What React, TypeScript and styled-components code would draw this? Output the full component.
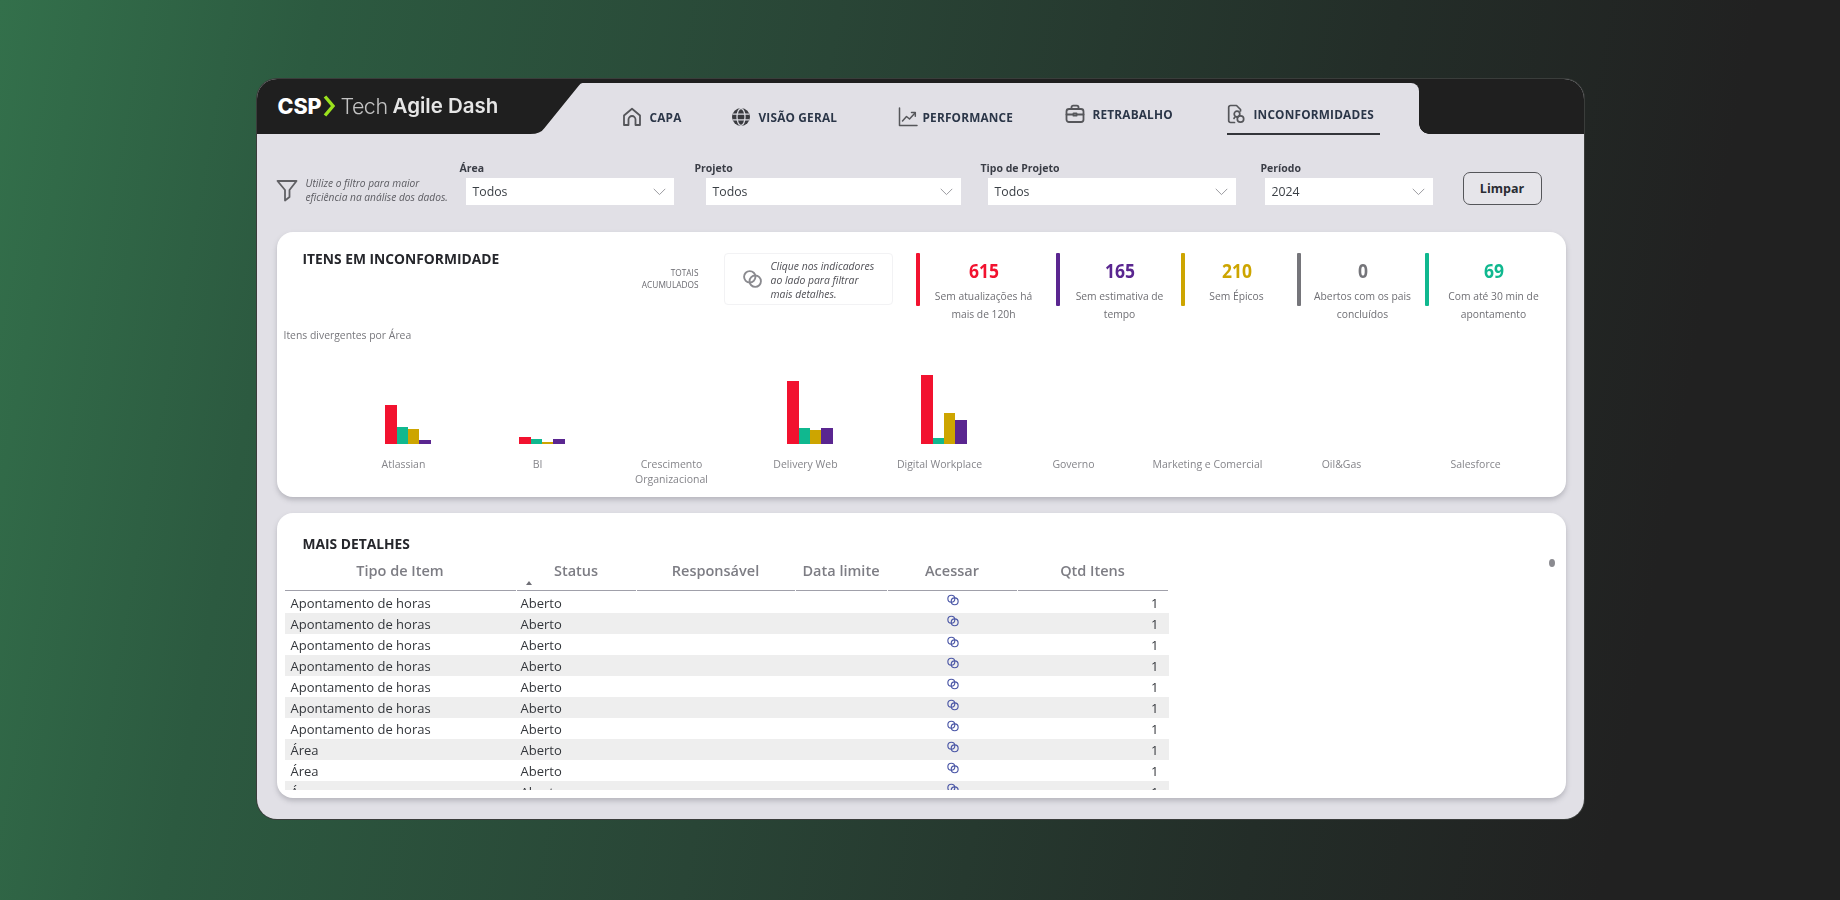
import React from "react";
import styled, { createGlobalStyle } from "styled-components";

const Global = createGlobalStyle`
  html, body { margin: 0; padding: 0; width: 1840px; height: 900px; overflow: hidden; background: #212121; }
  * { box-sizing: border-box; }
`;

const Page = styled.div`
  width: 1840px;
  height: 900px;
  padding-top: 79px;
  display: flex;
  justify-content: center;
  align-items: flex-start;
  background: linear-gradient(100deg, #33704b 0%, #2c5a40 16%, #294536 42%, #232d28 70%, #212121 88%);
  font-family: "Open Sans", "Liberation Sans", sans-serif;
`;

const Frame = styled.div`
  width: 1327px;
  height: 740px;
  border-radius: 20px;
  overflow: hidden;
  background: #e1e0e6;
  box-shadow: 0 0 0 1px #3a3d3b;
  display: flex;
  flex-direction: column;
  filter: blur(0.55px);
`;

const Header = styled.header`
  height: 55px;
  flex: none;
  display: flex;
  background: #1f1f1f;
  padding-top: 4px;
`;

const LogoArea = styled.div`
  width: 327px;
  flex: none;
  padding: 9px 0 0 21px;
  display: flex;
  align-items: flex-start;
  color: #f4f4f4;
  font-family: Inter, "Liberation Sans", sans-serif;
  font-size: 21.5px;
  line-height: 28px;
  white-space: nowrap;
`;

const LogoCsp = styled.span`
  font-weight: 800;
  letter-spacing: -0.1px;
  color: #fff;
`;

const LogoTech = styled.span`
  font-weight: 300;
  color: #c2c2c2;
  letter-spacing: -0.5px;
  margin-right: 5px;
`;

const LogoAgile = styled.span`
  font-size: 20.5px;
  font-weight: 600;
  color: #e6e6e6;
  letter-spacing: 0;
`;

const Chevron = styled.svg`
  width: 13px;
  height: 22px;
  margin: 3px 4px 0 2px;
  flex: none;
`;

const Nav = styled.nav`
  position: relative;
  flex: none;
  width: 835px;
  padding-left: 38px;
  background: #e1e0e6;
  border-top-right-radius: 8px;
  display: grid;
  grid-template-columns: 109px 167px 167px 161px 154px;

  &::before {
    content: "";
    position: absolute;
    left: -59px;
    top: 0;
    width: 60px;
    height: 51px;
    background: #e1e0e6;
    clip-path: path("M60 0 L58 0 Q56 0 54 3 L20 45 Q16 51 6 51 L60 51 Z");
  }

  &::after {
    content: "";
    position: absolute;
    right: -10px;
    bottom: 0;
    width: 10px;
    height: 10px;
    background: radial-gradient(circle at 100% 0, transparent 9.5px, #e1e0e6 10px);
  }
`;

const NavItem = styled.div<{ $lift?: boolean; $active?: boolean; $tight?: boolean }>`
  position: relative;
  display: flex;
  align-items: center;
  gap: ${(p) => (p.$tight ? "5px" : "8px")};
  height: 51px;
  padding-top: ${(p) => (p.$lift ? "13px" : "16px")};
  padding-bottom: ${(p) => (p.$lift ? "3px" : "0")};
  color: #2b3648;
  font-size: 11.8px;
  font-weight: 700;
  letter-spacing: 0.2px;
  white-space: nowrap;

  ${(p) =>
    p.$active &&
    `
    &::after {
      content: "";
      position: absolute;
      left: 1px;
      bottom: -1px;
      width: 153px;
      height: 2.5px;
      background: #33353a;
    }
  `}
`;

const NavIcon = styled.svg`
  width: 20px;
  height: 20px;
  flex: none;
  color: #55565a;
`;

const HeaderCap = styled.div`
  flex: 1;
`;

const FilterBar = styled.section`
  height: 98px;
  flex: none;
  padding: 0 0 27px 19px;
  display: flex;
  align-items: flex-end;
`;

const Hint = styled.div`
  width: 184px;
  flex: none;
  display: flex;
  align-items: center;
  gap: 8px;
  padding-bottom: 1px;
`;

const FunnelIcon = styled.svg`
  width: 22px;
  height: 23px;
  flex: none;
  color: #606064;
`;

const HintText = styled.div`
  font-size: 10.2px;
  line-height: 13.5px;
  font-style: italic;
  color: #5c5c62;
  white-space: nowrap;
`;

const Field = styled.div<{ $gap: number; $inset: number; $width: number }>`
  flex: none;
  margin-left: ${(p) => p.$gap}px;
  padding-left: ${(p) => p.$inset}px;
  width: ${(p) => p.$width + p.$inset}px;
  display: flex;
  flex-direction: column;
`;

const FieldLabel = styled.label<{ $inset: number }>`
  margin-left: ${(p) => -p.$inset}px;
  font-size: 10.5px;
  font-weight: 700;
  line-height: 14px;
  color: #3a3d46;
  margin-bottom: 3px;
`;

const Select = styled.div`
  height: 27px;
  background: #fff;
  display: flex;
  align-items: center;
  justify-content: space-between;
  padding: 0 7px 0 7px;
  font-size: 12.3px;
  color: #3a3f45;
`;

const SelectChevron = styled.svg`
  width: 15px;
  height: 15px;
  color: #98989d;
  flex: none;
`;

const ClearButton = styled.button`
  margin-left: 30px;
  width: 79px;
  height: 33px;
  border-radius: 7px;
  border: 1.5px solid #55565a;
  background: #e6e5ea;
  color: #2a2c33;
  font-family: inherit;
  font-size: 12.5px;
  font-weight: 700;
  padding: 0;
`;

const Card = styled.section<{ $height: number }>`
  position: relative;
  flex: none;
  height: ${(p) => p.$height}px;
  margin: 0 18px 0 20px;
  background: #fff;
  border-radius: 16px;
  box-shadow: 0 3px 5px rgba(120, 120, 130, 0.4);
`;

const SummaryCard = styled(Card)`
  display: flex;
  flex-direction: column;
  margin-bottom: 16px;
`;

const SummaryTop = styled.div`
  height: 74px;
  flex: none;
  margin-top: 21px;
  display: flex;
  padding-left: 26px;
`;

const CardTitle = styled.h2`
  margin: 0;
  font-size: 13.8px;
  line-height: 18px;
  font-weight: 700;
  color: #25262b;
  white-space: nowrap;
`;

const SummaryTitle = styled(CardTitle)`
  width: 320px;
  flex: none;
  margin-top: -3px;
`;

const Totals = styled.div`
  width: 76px;
  flex: none;
  margin-top: 14px;
  text-align: right;
  font-size: 8.3px;
  line-height: 12px;
  color: #6a6a70;
  white-space: nowrap;
`;

const ClickHint = styled.div`
  margin-left: 25px;
  width: 169px;
  height: 52px;
  flex: none;
  border: 1px solid #f2f2f4;
  border-radius: 4px;
  display: flex;
  align-items: center;
  gap: 7px;
  padding-left: 16px;
`;

const TapIcon = styled.svg`
  width: 23px;
  height: 20px;
  flex: none;
  color: #8a8a8f;
`;

const ClickHintText = styled.div`
  font-size: 10.4px;
  line-height: 14px;
  font-style: italic;
  color: #505056;
  white-space: nowrap;
  padding-top: 2px;
`;

const Kpis = styled.div`
  margin-left: 23px;
  display: grid;
  grid-template-columns: 140px 125px 116px 128px 134px;
  flex: none;
`;

const Kpi = styled.div<{ $trail: number }>`
  display: flex;
  padding-right: ${(p) => p.$trail}px;
`;

const KpiBar = styled.div<{ $color: string }>`
  width: 4px;
  height: 53px;
  flex: none;
  border-radius: 1px;
  background: ${(p) => p.$color};
`;

const KpiBody = styled.div`
  flex: 1;
  text-align: center;
  min-width: 0;
`;

const KpiValue = styled.div<{ $color: string }>`
  margin-top: 6px;
  font-size: 19px;
  line-height: 24px;
  font-weight: 700;
  color: ${(p) => p.$color};
  transform: scaleX(0.92);
`;

const KpiCaption = styled.div`
  margin-top: 5px;
  font-size: 10.3px;
  line-height: 17.5px;
  color: #6f6f74;
  white-space: pre-line;
`;

const ChartTitle = styled.div`
  margin: 1px 0 0 7px;
  font-size: 10.4px;
  line-height: 14px;
  color: #77777c;
  white-space: nowrap;
`;

const Chart = styled.div`
  margin-left: 60px;
  width: 1206px;
  display: grid;
  grid-template-columns: repeat(9, 134px);
`;

const ChartColumn = styled.div`
  display: flex;
  flex-direction: column;
  align-items: center;
`;

const Bars = styled.div`
  height: 102px;
  padding-left: 9px;
  display: flex;
  align-items: flex-end;
`;

const Bar = styled.div<{ $color: string }>`
  width: 11.3px;
  background: ${(p) => p.$color};
`;

const ChartLabel = styled.div`
  margin-top: 13px;
  font-size: 10.5px;
  line-height: 15px;
  color: #85858a;
  text-align: center;
  white-space: pre-line;
`;

const DetailCard = styled(Card)`
  padding: 22px 0 0 8px;
`;

const DetailTitle = styled(CardTitle)`
  padding-left: 18px;
`;

const TableClip = styled.div`
  margin-top: 8px;
  width: 884px;
  height: 229px;
  overflow: hidden;
`;

const Row = styled.div<{ $stripe?: boolean }>`
  display: grid;
  grid-template-columns: 232px 120px 159px 92px 130px 151px;
  height: 21px;
  align-items: center;
  background: ${(p) => (p.$stripe ? "#eeeeee" : "#ffffff")};
  font-size: 13px;
  color: #33363b;
  white-space: nowrap;
`;

const HeadRow = styled.div`
  display: grid;
  grid-template-columns: 232px 120px 159px 92px 130px 151px;
  height: 30px;
  margin-bottom: 1px;
`;

const HeadCell = styled.div`
  position: relative;
  border-bottom: 1.5px solid #a0a0aa;
  margin-right: 1px;
  text-align: center;
  font-size: 14.5px;
  line-height: 20px;
  font-weight: 600;
  color: #7d7d84;
`;

const SortMark = styled.span`
  position: absolute;
  left: 9px;
  bottom: 5px;
  width: 0;
  height: 0;
  border-left: 3.5px solid transparent;
  border-right: 3.5px solid transparent;
  border-bottom: 4px solid #6f6f76;
`;

const TextCell = styled.div`
  padding-left: 6px;
`;

const StatusCell = styled.div`
  padding-left: 4px;
`;

const LinkCell = styled.div`
  display: flex;
  justify-content: center;
  padding-bottom: 5px;
`;

const LinkIcon = styled.svg`
  width: 14px;
  height: 12px;
  color: #4a56a6;
`;

const QtyCell = styled.div`
  text-align: right;
  padding-right: 10px;
`;

const ScrollDot = styled.div`
  position: absolute;
  right: 11px;
  top: 46px;
  width: 6px;
  height: 8px;
  border-radius: 50%;
  background: #8b8b90;
`;

const RED = "#f2122f";
const GREEN = "#10b88f";
const GOLD = "#cda500";
const PURPLE = "#5a2690";

const kpis = [
  { value: "615", color: RED, caption: "Sem atualizações há\nmais de 120h", trail: 8 },
  { value: "165", color: PURPLE, caption: "Sem estimativa de\ntempo", trail: 1 },
  { value: "210", color: GOLD, caption: "Sem Épicos", trail: 8 },
  { value: "0", color: "#75757a", caption: "Abertos com os pais\nconcluídos", trail: 0 },
  { value: "69", color: GREEN, caption: "Com até 30 min de\napontamento", trail: 0 },
];

const chart: { label: string; bars?: number[] }[] = [
  { label: "Atlassian", bars: [39, 17, 15, 4] },
  { label: "BI", bars: [7, 5, 2, 5] },
  { label: "Crescimento\nOrganizacional" },
  { label: "Delivery Web", bars: [63, 16, 14, 16] },
  { label: "Digital Workplace", bars: [69, 6, 31, 24] },
  { label: "Governo" },
  { label: "Marketing e Comercial" },
  { label: "Oil&Gas" },
  { label: "Salesforce" },
];

const barColors = [RED, GREEN, GOLD, PURPLE];

const rows = [
  ...Array(7).fill("Apontamento de horas"),
  ...Array(3).fill("Área"),
] as string[];

const heads = ["Tipo de Item", "Status", "Responsável", "Data limite", "Acessar", "Qtd Itens"];

const HomeGlyph = () => (
  <NavIcon viewBox="0 0 20 20" fill="none" stroke="currentColor" strokeWidth="1.8" strokeLinejoin="round" strokeLinecap="round">
    <path d="M2 8.5 L10 1.8 L18 8.5 V18 H13.5 V12.5 A3.5 3.5 0 0 0 6.5 12.5 V18 H2 Z" />
  </NavIcon>
);

const GlobeGlyph = () => (
  <NavIcon viewBox="0 0 20 20">
    <circle cx="10" cy="10" r="9" fill="#3a3b40" />
    <ellipse cx="10" cy="10" rx="4" ry="8.5" fill="none" stroke="#dcdce2" strokeWidth="1.3" />
    <path d="M1.5 7.2 H18.5 M1.5 12.8 H18.5" stroke="#dcdce2" strokeWidth="1.3" />
  </NavIcon>
);

const ChartGlyph = () => (
  <NavIcon viewBox="0 0 20 20" fill="none" stroke="currentColor" strokeWidth="1.5" strokeLinecap="round" strokeLinejoin="round">
    <path d="M1.5 1 V18.5 H19" />
    <path d="M4.5 14 L8.5 9.5 L11.5 12 L17 6" />
    <path d="M13.5 5.5 H17.3 V9.2" />
  </NavIcon>
);

const CaseGlyph = () => (
  <NavIcon viewBox="0 0 20 20" fill="none" stroke="currentColor" strokeWidth="1.8" strokeLinecap="round" strokeLinejoin="round">
    <rect x="1.5" y="5" width="17" height="13" rx="2.5" />
    <path d="M6.5 5 V3.2 A1.6 1.6 0 0 1 8.1 1.6 H11.9 A1.6 1.6 0 0 1 13.5 3.2 V5" />
    <path d="M1.5 10.5 H8.5 M11.5 10.5 H18.5" />
    <rect x="8.5" y="9.3" width="3" height="2.4" />
  </NavIcon>
);

const DocGlyph = () => (
  <NavIcon viewBox="0 0 20 20" fill="none" stroke="currentColor" strokeWidth="1.7" strokeLinecap="round" strokeLinejoin="round">
    <path d="M8.5 18.5 H4.5 A1.8 1.8 0 0 1 2.7 16.7 V3.3 A1.8 1.8 0 0 1 4.5 1.5 H10.5 L14.5 5.5 V7" />
    <circle cx="11" cy="10" r="2.8" />
    <circle cx="14.5" cy="15" r="3.2" />
    <path d="M8 14.5 A2.2 2.2 0 0 1 10.5 12.8" />
  </NavIcon>
);

const LinkGlyph = () => (
  <>
    <circle cx="8" cy="7" r="5.2" fill="none" stroke="currentColor" strokeWidth="1.7" />
    <circle cx="13" cy="11" r="5.2" fill="none" stroke="currentColor" strokeWidth="1.7" />
  </>
);

const ChevronDown = () => (
  <SelectChevron viewBox="0 0 17 17" fill="none" stroke="currentColor" strokeWidth="1.1">
    <path d="M2 5.5 L8.5 12 L15 5.5" />
  </SelectChevron>
);

const filters = [
  { label: "Área", value: "Todos", gap: 0, inset: 6, width: 208 },
  { label: "Projeto", value: "Todos", gap: 21, inset: 11, width: 255 },
  { label: "Tipo de Projeto", value: "Todos", gap: 20, inset: 7, width: 248 },
  { label: "Período", value: "2024", gap: 25, inset: 4, width: 168 },
];

export default function App() {
  return (
    <Page>
      <Global />
      <Frame>
        <Header>
          <LogoArea>
            <LogoCsp>CSP</LogoCsp>
            <Chevron viewBox="0 0 13 22" fill="none" stroke="#9be21d" strokeWidth="3.4">
              <path d="M2 1.5 L10 11 L2 20.5" />
            </Chevron>
            <LogoTech>Tech</LogoTech>
            <LogoAgile>Agile Dash</LogoAgile>
          </LogoArea>
          <Nav>
            <NavItem><HomeGlyph />CAPA</NavItem>
            <NavItem><GlobeGlyph />VISÃO GERAL</NavItem>
            <NavItem $tight><ChartGlyph />PERFORMANCE</NavItem>
            <NavItem $lift><CaseGlyph />RETRABALHO</NavItem>
            <NavItem $lift $active><DocGlyph />INCONFORMIDADES</NavItem>
          </Nav>
          <HeaderCap />
        </Header>

        <FilterBar>
          <Hint>
            <FunnelIcon viewBox="0 0 22 23" fill="none" stroke="currentColor" strokeWidth="1.8" strokeLinejoin="round">
              <path d="M1.5 2 H20.5 L13.5 11 V18 L9 21.5 V11 Z" />
            </FunnelIcon>
            <HintText>
              Utilize o filtro para maior
              <br />
              eficiência na análise dos dados.
            </HintText>
          </Hint>
          {filters.map((f) => (
            <Field key={f.label} $gap={f.gap} $inset={f.inset} $width={f.width}>
              <FieldLabel $inset={f.inset}>{f.label}</FieldLabel>
              <Select>
                {f.value}
                <ChevronDown />
              </Select>
            </Field>
          ))}
          <ClearButton>Limpar</ClearButton>
        </FilterBar>

        <SummaryCard $height={265}>
          <SummaryTop>
            <SummaryTitle>ITENS EM INCONFORMIDADE</SummaryTitle>
            <Totals>
              TOTAIS
              <br />
              ACUMULADOS
            </Totals>
            <ClickHint>
              <TapIcon viewBox="0 0 21 18">
                <LinkGlyph />
              </TapIcon>
              <ClickHintText>
                Clique nos indicadores
                <br />
                ao lado para filtrar
                <br />
                mais detalhes.
              </ClickHintText>
            </ClickHint>
            <Kpis>
              {kpis.map((k) => (
                <Kpi key={k.value} $trail={k.trail}>
                  <KpiBar $color={k.color} />
                  <KpiBody>
                    <KpiValue $color={k.color}>{k.value}</KpiValue>
                    <KpiCaption>{k.caption}</KpiCaption>
                  </KpiBody>
                </Kpi>
              ))}
            </Kpis>
          </SummaryTop>
          <ChartTitle>Itens divergentes por Área</ChartTitle>
          <Chart>
            {chart.map((c) => (
              <ChartColumn key={c.label}>
                <Bars>
                  {c.bars?.map((h, i) => (
                    <Bar key={i} $color={barColors[i]} style={{ height: h }} />
                  ))}
                </Bars>
                <ChartLabel>{c.label}</ChartLabel>
              </ChartColumn>
            ))}
          </Chart>
        </SummaryCard>

        <DetailCard $height={285}>
          <DetailTitle>MAIS DETALHES</DetailTitle>
          <TableClip>
            <HeadRow>
              {heads.map((h) => (
                <HeadCell key={h}>
                  {h}
                  {h === "Status" && <SortMark />}
                </HeadCell>
              ))}
            </HeadRow>
            {rows.map((r, i) => (
              <Row key={i} $stripe={i % 2 === 1}>
                <TextCell>{r}</TextCell>
                <StatusCell>Aberto</StatusCell>
                <div />
                <div />
                <LinkCell>
                  <LinkIcon viewBox="0 0 21 18">
                    <LinkGlyph />
                  </LinkIcon>
                </LinkCell>
                <QtyCell>1</QtyCell>
              </Row>
            ))}
          </TableClip>
          <ScrollDot />
        </DetailCard>
      </Frame>
    </Page>
  );
}
